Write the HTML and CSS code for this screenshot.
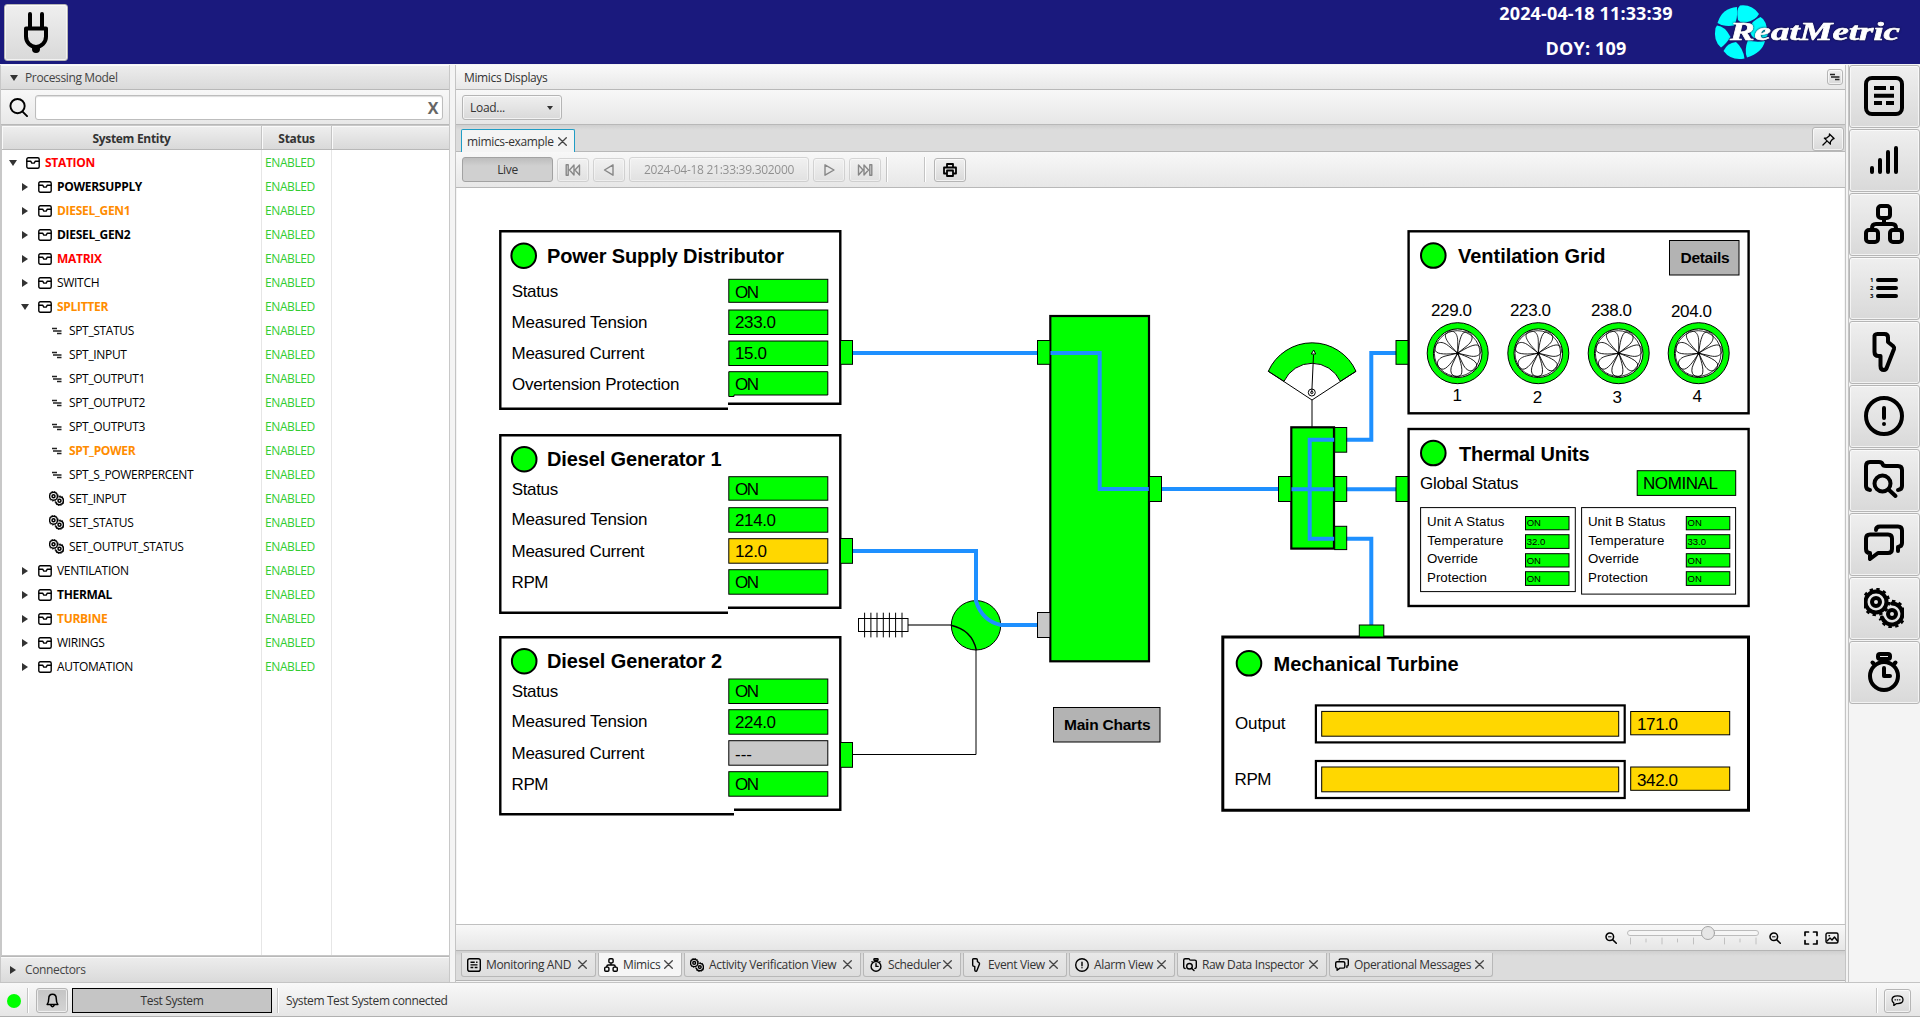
FILE: index.html
```html
<!DOCTYPE html>
<html lang="en">
<head>
<meta charset="utf-8">
<title>ReatMetric</title>
<link rel="stylesheet" href="styles.css">
</head>
<body>
<svg class="defs" aria-hidden="true">
  <defs>
    <symbol id="i-list" viewBox="0 0 40 40"><rect x="2" y="2" width="36" height="36" rx="6"/><path stroke-linecap="butt" d="M10 12h12M26 12h4M10 19.700h20M10 27h8M22 27h8"/></symbol>
    <symbol id="i-signal" viewBox="0 0 40 40"><path d="M8 28v4M16 20v12M24 12v20M32 8v24"/></symbol>
    <symbol id="i-tree" viewBox="0 0 40 40"><rect x="14" y="2" width="12" height="12" rx="3"/><rect x="2" y="26" width="12" height="12" rx="3"/><rect x="26" y="26" width="12" height="12" rx="3"/><path d="M20 15v5M8 25v-1q0-4 4-4h16q4 0 4 4v1"/></symbol>
    <symbol id="i-numbers" viewBox="0 0 40 40"><path d="M14 12h18M14 20h18M14 28h18"/><text class="tiny" x="6" y="14">1</text><text class="tiny" x="6" y="22">2</text><text class="tiny" x="6" y="30">3</text></symbol>
    <symbol id="i-event" viewBox="0 0 40 40"><path d="M13.500 2h7q3.500 0 3.500 3.500V10l5 4q1.500 1.500 1 3l-7 18q-1 3-3 3-3.500 0-3.500-4V24h-2q-4 0-4-4V5.500Q10 2 13.500 2z"/></symbol>
    <symbol id="i-alarm" viewBox="0 0 40 40"><circle cx="20" cy="20" r="18"/><path d="M20 12v10M20 28v.01"/></symbol>
    <symbol id="i-folder" viewBox="0 0 40 40"><path d="M6 30q-4-.5-4-4V6q0-4 4-4h9q3 0 3.500 2T22 6h12q4 0 4 4v16q0 3.500-4 4"/><circle cx="18.500" cy="23.500" r="8"/><path d="M24.500 29.500L31.500 36"/></symbol>
    <symbol id="i-chat" viewBox="0 0 40 40"><path d="M6 10.500h18q4 0 4 4V25q0 4-4 4H14l-8 6v-6q-4 0-4-4V14.500q0-4 4-4z"/><path d="M12 6q0-3.500 4-3.500h18q4 0 4 4V19q0 3.500-4 4v4"/></symbol>
    <symbol id="i-gears" viewBox="0 0 40 40" overflow="visible"><circle cx="12" cy="14" r="10.500"/><circle class="teeth" cx="12" cy="14" r="13" stroke-dasharray="3.400 3.400"/><circle cx="12" cy="14" r="4"/><circle cx="28" cy="26" r="4"/><path d="M28 15.500a10.500 10.500 0 1 1-10 14"/><path class="teeth" d="M28 13a13 13 0 1 1-12.200 17.500" stroke-dasharray="3.400 3.400"/></symbol>
    <symbol id="i-watch" viewBox="0 0 40 40"><circle cx="20" cy="24" r="14"/><rect x="14" y="2" width="12" height="5" rx="2"/><path d="M8.500 10.500l1 1M31.500 10.500l-1 1M20 16v8h6"/></symbol>
    <symbol id="i-box" viewBox="0 0 14 12"><rect x=".8" y=".8" width="12.400" height="10.400" rx="1.500"/><path d="M1 4.200h3.700l1.100 1.900h2.400l1.100-1.900H13"/></symbol>
    <symbol id="i-param" viewBox="0 0 10 8"><path d="M0 1.500h5M1 4h8.500M5 6.500h4.500"/></symbol>
    <symbol id="i-zoom" viewBox="0 0 12 12"><circle cx="4.800" cy="4.800" r="3.800"/><path d="M7.600 7.600L11.300 11.300"/><path class="bar-in" d="M3.500 4.800h2.600"/></symbol>
    <g id="petal"><path d="M0 0C-7-7-14-15-12-19C-9-24 0-24 0-12L0 0"/></g>
    <g id="fan">
      <circle class="ok thin" r="30.500"/>
      <circle class="white thin" r="24.300"/>
      <circle class="none hair" cx="-.5" cy=".3" r="22.800"/>
      <g class="none hair">
        <use href="#petal"/><use href="#petal" transform="rotate(51.400)"/><use href="#petal" transform="rotate(102.900)"/><use href="#petal" transform="rotate(154.300)"/><use href="#petal" transform="rotate(205.700)"/><use href="#petal" transform="rotate(257.100)"/><use href="#petal" transform="rotate(308.600)"/>
      </g>
      <circle r="1.500"/>
    </g>
  </defs>
</svg>

<header class="top">
  <button class="btn plug"><svg class="ic" viewBox="0 0 64 57"><path d="M26 10v14M38 10v14M22 24.500h20v8a10 10.500 0 0 1-20 0z"/><circle class="dot" cx="32" cy="45" r="4"/></svg></button>
  <div class="clock"><div class="t1">2024-04-18 11:33:39</div><div class="t2">DOY: 109</div></div>
  <svg class="logo" viewBox="0 0 210 64" width="210" height="64">
    <g fill="#0ff">
      <path d="M28 20Q26 9 30 5.500Q42 4 49 14Q46 20 36 22.500Q31 24 28 20Z"/>
      <path d="M50.500 17Q57 20 57.700 35Q56 39 44 38Q39 34 40 27Q42 21 50.500 17Z"/>
      <path d="M38 40Q46 43 55 41Q52 53 37 57.500Q34 50 38 40Z"/>
      <path d="M26 42Q33 48 34.500 58.500Q21 61 13.500 51Q17 43 26 42Z"/>
      <path d="M7 25.500Q15 26 20.500 37Q16 44 11 47.500Q3 41 5.500 28Z"/>
      <path d="M27 7Q28 19 24 25.500Q14 27 7.500 23Q12 8 27 7Z"/>
    </g>
    <text class="brand" x="20" y="40" textLength="170" lengthAdjust="spacingAndGlyphs">ReatMetric</text>
  </svg>
</header>

<main class="work">
  <section class="left">
    <div class="pane-title"><i class="tri down"></i>Processing Model</div>
    <div class="search"><svg class="lens" viewBox="0 0 20 20"><circle cx="9" cy="8.500" r="7.500"/><path d="M14 14l5 5"/></svg><div class="field"><b>X</b></div></div>
    <div class="tree">
      <div class="row head"><span>System Entity</span><span>Status</span><span></span></div>
      <div class="row l0"><span class="red"><i class="tri down"></i><svg class="bx"><use href="#i-box"/></svg>STATION</span><span>ENABLED</span><span></span></div>
      <div class="row l1"><span class="bold"><i class="tri"></i><svg class="bx"><use href="#i-box"/></svg>POWERSUPPLY</span><span>ENABLED</span><span></span></div>
      <div class="row l1"><span class="amber"><i class="tri"></i><svg class="bx"><use href="#i-box"/></svg>DIESEL_GEN1</span><span>ENABLED</span><span></span></div>
      <div class="row l1"><span class="bold"><i class="tri"></i><svg class="bx"><use href="#i-box"/></svg>DIESEL_GEN2</span><span>ENABLED</span><span></span></div>
      <div class="row l1"><span class="red"><i class="tri"></i><svg class="bx"><use href="#i-box"/></svg>MATRIX</span><span>ENABLED</span><span></span></div>
      <div class="row l1"><span><i class="tri"></i><svg class="bx"><use href="#i-box"/></svg>SWITCH</span><span>ENABLED</span><span></span></div>
      <div class="row l1"><span class="amber"><i class="tri down"></i><svg class="bx"><use href="#i-box"/></svg>SPLITTER</span><span>ENABLED</span><span></span></div>
      <div class="row l2"><span><svg class="pm"><use href="#i-param"/></svg>SPT_STATUS</span><span>ENABLED</span><span></span></div>
      <div class="row l2"><span><svg class="pm"><use href="#i-param"/></svg>SPT_INPUT</span><span>ENABLED</span><span></span></div>
      <div class="row l2"><span><svg class="pm"><use href="#i-param"/></svg>SPT_OUTPUT1</span><span>ENABLED</span><span></span></div>
      <div class="row l2"><span><svg class="pm"><use href="#i-param"/></svg>SPT_OUTPUT2</span><span>ENABLED</span><span></span></div>
      <div class="row l2"><span><svg class="pm"><use href="#i-param"/></svg>SPT_OUTPUT3</span><span>ENABLED</span><span></span></div>
      <div class="row l2"><span class="amber"><svg class="pm"><use href="#i-param"/></svg>SPT_POWER</span><span>ENABLED</span><span></span></div>
      <div class="row l2"><span><svg class="pm"><use href="#i-param"/></svg>SPT_S_POWERPERCENT</span><span>ENABLED</span><span></span></div>
      <div class="row l2"><span><svg class="ic gr"><use href="#i-gears"/></svg>SET_INPUT</span><span>ENABLED</span><span></span></div>
      <div class="row l2"><span><svg class="ic gr"><use href="#i-gears"/></svg>SET_STATUS</span><span>ENABLED</span><span></span></div>
      <div class="row l2"><span><svg class="ic gr"><use href="#i-gears"/></svg>SET_OUTPUT_STATUS</span><span>ENABLED</span><span></span></div>
      <div class="row l1"><span><i class="tri"></i><svg class="bx"><use href="#i-box"/></svg>VENTILATION</span><span>ENABLED</span><span></span></div>
      <div class="row l1"><span class="bold"><i class="tri"></i><svg class="bx"><use href="#i-box"/></svg>THERMAL</span><span>ENABLED</span><span></span></div>
      <div class="row l1"><span class="amber"><i class="tri"></i><svg class="bx"><use href="#i-box"/></svg>TURBINE</span><span>ENABLED</span><span></span></div>
      <div class="row l1"><span><i class="tri"></i><svg class="bx"><use href="#i-box"/></svg>WIRINGS</span><span>ENABLED</span><span></span></div>
      <div class="row l1"><span><i class="tri"></i><svg class="bx"><use href="#i-box"/></svg>AUTOMATION</span><span>ENABLED</span><span></span></div>
      <div class="row fill"><span></span><span></span><span></span></div>
    </div>
    <div class="pane-title bottom"><i class="tri"></i>Connectors</div>
  </section>

  <section class="center">
    <div class="view-title"><span>Mimics Displays</span><button class="btn mini"><svg class="pm"><use href="#i-param"/></svg></button></div>
    <div class="bar load"><button class="btn combo">Load...<i class="tri down"></i></button></div>
    <div class="tabs"><div class="tab active">mimics-example<svg class="x" viewBox="0 0 9 9"><path d="M.7.7l7.600 7.600M8.300.7L.7 8.300"/></svg></div><button class="btn pin"><svg viewBox="0 0 14 14"><path d="M8 1l5 5-1.500.500-2.500 3v2.500L2.500 5.500H5l3-2.500zM5.500 8.500L1 13"/></svg></button></div>
    <div class="bar player">
      <button class="btn live">Live</button>
      <button class="btn nav off"><svg viewBox="0 0 16 12"><path d="M1.200 .8h2v10.400h-2zM9 1v10L4.500 6zM14.500 1v10L10 6z"/></svg></button>
      <button class="btn nav off"><svg viewBox="0 0 16 12"><path d="M12 .8v10.400L3.500 6z"/></svg></button>
      <button class="btn time off">2024-04-18 21:33:39.302000</button>
      <button class="btn nav off"><svg viewBox="0 0 16 12"><path d="M4 .8v10.400L13 6z"/></svg></button>
      <button class="btn nav off"><svg viewBox="0 0 16 12"><path d="M1.500 1v10L6 6zM7 1v10l4.500-5zM12.800 .8h2v10.400h-2z"/></svg></button>
      <i class="sep"></i><i class="sep wide"></i>
      <button class="btn nav print"><svg viewBox="0 0 14 14"><path d="M4 3.500v-2.500h6v2.500M3.500 10.500H1v-6h12v6h-2.500M4 7.500h6v5.500H4z"/></svg></button>
    </div>

    <svg class="mimic" viewBox="457 188 1387 736">
      <g class="panel">
        <path d="M728 408.700H500.300V231.300H840.300V403.700H728"/>
        <path d="M728 612.700H500.300V435.300H840.300V607.700H728"/>
        <path d="M734 814.300H500.300V637.300H840.300V809.700H734"/>
        <rect x="1408.600" y="231.300" width="340" height="182"/>
        <rect x="1408.600" y="429" width="340" height="177"/>
        <path class="heavy" d="M1222.800 637H1748.500V810.300H1222.800z"/>
      </g>
      <g class="ok lamp">
        <circle cx="523.700" cy="255.700" r="12.300"/><circle cx="524.200" cy="459.200" r="12.300"/><circle cx="524.200" cy="661.200" r="12.300"/>
        <circle cx="1433.300" cy="255.500" r="12.300"/><circle cx="1433.300" cy="453" r="12.300"/><circle cx="1249" cy="663.300" r="12.300"/>
      </g>
      <g class="h">
        <text x="547" y="263" textLength="237">Power Supply Distributor</text>
        <text x="547" y="466" textLength="174.500">Diesel Generator 1</text>
        <text x="547" y="667.700" textLength="175">Diesel Generator 2</text>
        <text x="1458" y="262.700" textLength="147.500">Ventilation Grid</text>
        <text x="1459" y="460.500" textLength="130.500">Thermal Units</text>
        <text x="1273.500" y="670.700" textLength="185">Mechanical Turbine</text>
      </g>
      <g class="lbl">
        <text x="511.700" y="297.300" textLength="46.500">Status</text><text x="511.500" y="328" textLength="136">Measured Tension</text><text x="511.500" y="359" textLength="133">Measured Current</text><text x="512" y="390" textLength="167.500">Overtension Protection</text>
        <text x="511.700" y="495" textLength="46.500">Status</text><text x="511.500" y="525.300" textLength="136">Measured Tension</text><text x="511.500" y="557" textLength="133">Measured Current</text><text x="511.500" y="588" textLength="37">RPM</text>
        <text x="511.700" y="697.300" textLength="46.500">Status</text><text x="511.500" y="727" textLength="136">Measured Tension</text><text x="511.500" y="759.300" textLength="133">Measured Current</text><text x="511.500" y="790" textLength="37">RPM</text>
        <text x="1420" y="489" textLength="98.500">Global Status</text>
        <text x="1235" y="729" textLength="50.500">Output</text><text x="1234.500" y="785" textLength="37">RPM</text>
      </g>
      <g class="ok thin">
        <rect x="728.800" y="279.300" width="99" height="23"/><rect x="728.800" y="310" width="99" height="24.500"/><rect x="728.800" y="341" width="99" height="24.500"/><path d="M728.800 371.700H827.800V395H734V396.500H728.800z"/>
        <rect x="728.800" y="476.700" width="99" height="23.500"/><rect x="728.800" y="507.700" width="99" height="24.500"/><rect class="warn" x="728.800" y="538.700" width="99" height="24.500"/><rect x="728.800" y="569.700" width="99" height="24.500"/>
        <rect x="728.800" y="679" width="99" height="24.500"/><rect x="728.800" y="709.700" width="99" height="24.500"/><rect class="unk" x="728.800" y="740.700" width="99" height="24.500"/><rect x="728.800" y="771.700" width="99" height="24.500"/>
        <rect x="1637.200" y="470.700" width="98.500" height="24.700"/>
        <rect class="warn" x="1630.700" y="711.500" width="99" height="23.300"/><rect class="warn" x="1630.700" y="767" width="99" height="23.300"/>
      </g>
      <g class="lbl">
        <text x="735" y="298" textLength="24">ON</text><text x="735" y="328" textLength="41">233.0</text><text x="735" y="359" textLength="32">15.0</text><text x="735" y="390" textLength="24">ON</text>
        <text x="735" y="495" textLength="24">ON</text><text x="735" y="526" textLength="41">214.0</text><text x="735" y="557" textLength="32">12.0</text><text x="735" y="588" textLength="24">ON</text>
        <text x="735" y="697" textLength="24">ON</text><text x="735" y="728" textLength="41">224.0</text><text x="735" y="760" textLength="17">---</text><text x="735" y="790" textLength="24">ON</text>
        <text x="1643" y="489" textLength="75">NOMINAL</text>
        <text x="1637" y="730" textLength="41">171.0</text><text x="1637" y="786" textLength="41">342.0</text>
        <text x="1431" y="316.300" textLength="41">229.0</text><text x="1510" y="316.300" textLength="41">223.0</text><text x="1591" y="316.300" textLength="41">238.0</text><text x="1671" y="317" textLength="41">204.0</text>
        <text x="1452.500" y="401">1</text><text x="1532.700" y="402.500">2</text><text x="1612.500" y="402.500">3</text><text x="1692.500" y="402">4</text>
      </g>

      <g class="thin btnbox"><rect x="1669.500" y="240.500" width="69.500" height="34.500"/><rect x="1053.500" y="707.500" width="106.500" height="34.500"/></g>
      <g class="bt"><text x="1680.500" y="263" textLength="49">Details</text><text x="1064" y="730" textLength="86.500">Main Charts</text></g>

      <use href="#fan" x="1457.700" y="353.200"/><use href="#fan" x="1538.300" y="353.200"/><use href="#fan" x="1618.700" y="353.200"/><use href="#fan" x="1698.700" y="353.200"/>

      <g class="thin sub"><rect x="1420.600" y="507.600" width="154.700" height="84"/><rect x="1581.600" y="507.600" width="154" height="86.500"/></g>
      <g class="s">
        <text x="1427" y="526.300" textLength="77.500">Unit A Status</text><text x="1427.300" y="545.300" textLength="76">Temperature</text><text x="1427" y="563.300" textLength="51">Override</text><text x="1427" y="582.300" textLength="60">Protection</text>
        <text x="1588" y="526.300" textLength="77.500">Unit B Status</text><text x="1588.300" y="545.300" textLength="76">Temperature</text><text x="1588" y="563.300" textLength="51">Override</text><text x="1588" y="582.300" textLength="60">Protection</text>
      </g>
      <g class="ok thin">
        <rect x="1525.500" y="516.500" width="43.500" height="13.300"/><rect x="1525.500" y="534.700" width="43.500" height="13.700"/><rect x="1525.500" y="553.700" width="43.500" height="13.300"/><rect x="1525.500" y="571.700" width="43.500" height="13.700"/>
        <rect x="1686.300" y="516.500" width="43.500" height="13.300"/><rect x="1686.300" y="534.700" width="43.500" height="13.700"/><rect x="1686.300" y="553.700" width="43.500" height="13.300"/><rect x="1686.300" y="571.700" width="43.500" height="13.700"/>
      </g>
      <g class="xs">
        <text x="1526.700" y="526">ON</text><text x="1526.700" y="545">32.0</text><text x="1526.700" y="563.500">ON</text><text x="1526.700" y="582">ON</text>
        <text x="1687.500" y="526">ON</text><text x="1687.500" y="545">33.0</text><text x="1687.500" y="563.500">ON</text><text x="1687.500" y="582">ON</text>
      </g>

      <g class="panel gaugebar"><rect x="1315.900" y="705.400" width="308.800" height="37"/><rect x="1315.900" y="761" width="308.800" height="37"/></g>
      <g class="warn thin"><rect x="1321.700" y="711.400" width="297" height="24.800"/><rect x="1321.700" y="767" width="297" height="24.800"/></g>

      <rect class="ok mid" x="1050.300" y="316" width="98.700" height="345.300"/>
      <rect class="ok mid" x="1291.300" y="427.300" width="42.700" height="121.300"/>
      <path class="none coil" d="M908 625H951"/>
      <path class="none thin" d="M852 754.500H976V650"/>
      <circle class="ok thin" cx="976" cy="625.300" r="24.700"/>
      <path class="none dark" d="M951 625.300Q972 630 976.300 650"/>
      <g class="wire">
        <path d="M852 353H1037M1050 353H1099.700V489H1149M1161 489H1279"/>
        <path d="M852 551H976V601Q982 621 1001 625H1038"/>
        <path d="M1335 439.700H1309.700V538.700H1335M1291 489.200H1335"/>
        <path d="M1346 439.700H1371.300V353H1396M1346 489.200H1396M1346 538.700H1371.300V625"/>
      </g>
      <g class="ok thin">
        <rect x="840.500" y="340.500" width="12" height="23.800"/><rect x="840.500" y="538.500" width="12" height="24.800"/><rect x="840.500" y="742.500" width="12" height="24.800"/>
        <rect x="1037.500" y="340.500" width="12.500" height="23.800"/><rect class="unk" x="1037.500" y="612.500" width="12.500" height="25"/>
        <rect x="1149.300" y="476.500" width="12.200" height="25"/><rect x="1278.500" y="476.500" width="12.500" height="25"/>
        <rect x="1334.700" y="427.500" width="12" height="24.700"/><rect x="1334.700" y="476.500" width="12" height="25"/><rect x="1334.700" y="526.300" width="12" height="23.300"/>
        <rect x="1396" y="340.500" width="12" height="23.800"/><rect x="1396" y="476.500" width="12" height="25"/><rect x="1359.300" y="625" width="24.500" height="12"/>
      </g>
      <g class="none thin"><rect x="858.500" y="618.500" width="49.500" height="13"/><path d="M864.600 612.700v24.700M870.900 612.700v24.700M877 612.700v24.700M883.300 612.700v24.700M889.400 612.700v24.700M895.600 612.700v24.700M902 612.700v24.700"/></g>
      <g class="thin">
        <path class="okf" d="M1268.300 371.300A48 48 0 0 1 1356 371.300L1340.300 381.300A31 31 0 0 0 1284 381.300z"/>
        <path class="none" d="M1268.300 371.300L1312 400L1356 371.300"/>
        <path d="M1312 400V427M1311.800 392.500L1313.500 355"/>
        <circle class="none" cx="1311.800" cy="392.500" r="3.500"/><circle cx="1311.800" cy="392.500" r="1.200"/>
        <path class="white" d="M1311.300 354L1313.700 350L1315.700 354z"/>
      </g>
    </svg>

    <div class="zoombar">
      <svg class="zi"><use href="#i-zoom"/></svg>
      <svg class="slider" viewBox="0 0 132 22" width="132" height="22"><rect x=".5" y="5.500" width="131" height="5" rx="2.500" fill="#f6f6f6" stroke="#bcbcbc"/><path class="ticks" d="M3.500 13v6M19 14v3M35 13v6M50.500 14v3M66.500 13v6M97.500 13v6M113 14v3M129 13v6"/><circle cx="81" cy="8" r="6.500" fill="#e6e6e6" stroke="#a4a4a4"/></svg>
      <svg class="zi"><use href="#i-zoom"/></svg>
      <svg class="ex" viewBox="0 0 14 14"><path d="M1 4.500V1h3.500M9.500 1H13v3.500M13 9.500V13H9.500M4.500 13H1V9.500"/></svg>
      <svg class="pic" viewBox="0 0 14 12"><rect x="1" y="1" width="12" height="10" rx="1.500"/><path d="M2 9l3-3 2 2 2.500-3L12.500 9M4 3.800h.5"/></svg>
    </div>
    <div class="views">
      <div class="vt v1"><svg class="ic"><use href="#i-list"/></svg><span>Monitoring AND</span><svg class="x" viewBox="0 0 9 9"><path d="M.7.7l7.600 7.600M8.300.7L.7 8.300"/></svg></div>
      <div class="vt v2 on"><svg class="ic"><use href="#i-tree"/></svg><span>Mimics</span><svg class="x" viewBox="0 0 9 9"><path d="M.7.7l7.600 7.600M8.300.7L.7 8.300"/></svg></div>
      <div class="vt v3"><svg class="ic"><use href="#i-gears"/></svg><span>Activity Verification View</span><svg class="x" viewBox="0 0 9 9"><path d="M.7.7l7.600 7.600M8.300.7L.7 8.300"/></svg></div>
      <div class="vt v4"><svg class="ic"><use href="#i-watch"/></svg><span>Scheduler</span><svg class="x" viewBox="0 0 9 9"><path d="M.7.7l7.600 7.600M8.300.7L.7 8.300"/></svg></div>
      <div class="vt v5"><svg class="ic"><use href="#i-event"/></svg><span>Event View</span><svg class="x" viewBox="0 0 9 9"><path d="M.7.7l7.600 7.600M8.300.7L.7 8.300"/></svg></div>
      <div class="vt v6"><svg class="ic"><use href="#i-alarm"/></svg><span>Alarm View</span><svg class="x" viewBox="0 0 9 9"><path d="M.7.7l7.600 7.600M8.300.7L.7 8.300"/></svg></div>
      <div class="vt v7"><svg class="ic"><use href="#i-folder"/></svg><span>Raw Data Inspector</span><svg class="x" viewBox="0 0 9 9"><path d="M.7.7l7.600 7.600M8.300.7L.7 8.300"/></svg></div>
      <div class="vt v8"><svg class="ic"><use href="#i-chat"/></svg><span>Operational Messages</span><svg class="x" viewBox="0 0 9 9"><path d="M.7.7l7.600 7.600M8.300.7L.7 8.300"/></svg></div>
    </div>
  </section>

  <nav class="side">
    <button class="btn"><svg class="ic"><use href="#i-list"/></svg></button>
    <button class="btn"><svg class="ic"><use href="#i-signal"/></svg></button>
    <button class="btn"><svg class="ic"><use href="#i-tree"/></svg></button>
    <button class="btn"><svg class="ic"><use href="#i-numbers"/></svg></button>
    <button class="btn"><svg class="ic"><use href="#i-event"/></svg></button>
    <button class="btn"><svg class="ic"><use href="#i-alarm"/></svg></button>
    <button class="btn"><svg class="ic"><use href="#i-folder"/></svg></button>
    <button class="btn"><svg class="ic"><use href="#i-chat"/></svg></button>
    <button class="btn"><svg class="ic"><use href="#i-gears"/></svg></button>
    <button class="btn"><svg class="ic"><use href="#i-watch"/></svg></button>
  </nav>
</main>

<footer class="status">
  <i class="led"></i><i class="sep"></i>
  <button class="btn bell"><svg viewBox="0 0 12 14"><path d="M6 1.200q3.500 0 3.500 4Q9.500 9 11 10.700H1Q2.500 9 2.500 5.200q0-4 3.500-4zM4.500 11.500q1.500 2.500 3 0"/></svg></button>
  <div class="system">Test System</div><i class="sep"></i>
  <span class="msg">System Test System connected</span>
  <i class="sep end"></i>
  <button class="btn talk"><svg viewBox="0 0 14 12"><path d="M7 1q6 0 6 4.200T7 9.300H6L3 11.500V8.600Q1 7.500 1 5.200 1 1 7 1z"/><path d="M4.300 5.200h.4M6.800 5.200h.4M9.300 5.200h.4"/></svg></button>
</footer>
</body>
</html>
```
FILE: styles.css
```css
* { box-sizing: border-box; }
html, body { height: 100%; }
body {
  margin: 0;
  display: flex;
  flex-direction: column;
  width: 1920px;
  height: 1017px;
  overflow: hidden;
  background: #f4f4f4;
  color: #333;
  font: 12px/16px "Open Sans", "Noto Sans", sans-serif;
  letter-spacing: -0.36px;
}
.defs { position: absolute; width: 0; height: 0; }
button { font: inherit; color: inherit; letter-spacing: inherit; padding: 0; margin: 0; }
.btn {
  display: flex;
  align-items: center;
  justify-content: center;
  border: 1px solid #b5b5b5;
  border-radius: 3px;
  background: linear-gradient(#efefef, #d9d9d9);
  box-shadow: inset 0 0 0 1px rgba(255, 255, 255, 0.65);
}
svg { fill: none; stroke: #000; flex: none; stroke-linecap: round; stroke-linejoin: round; }
svg text { stroke: none; fill: #000; letter-spacing: 0; }
.ic { stroke-width: 4; width: 40px; height: 40px; }
.ic .teeth, .teeth { stroke-width: 2.4; stroke-linecap: butt; }
.bar-in { stroke-width: 1; }
.tiny { font: bold 6px "Open Sans", sans-serif; }
.dot { fill: #000; stroke: none; }
.tri { width: 0; height: 0; border-left: 6px solid #333; border-top: 4px solid transparent; border-bottom: 4px solid transparent; flex: none; }
.tri.down { border-left: 4px solid transparent; border-right: 4px solid transparent; border-top: 6px solid #333; border-bottom: 0; }

.top { height: 64px; flex: none; background: #1a197d; display: flex; align-items: flex-start; }
.plug { width: 64px; height: 57px; margin: 4px 0 0 4px; }
.plug .ic { width: 64px; height: 57px; }
.clock { margin-left: auto; width: 260px; text-align: center; color: #fff; font: bold 18px/24px "Open Sans", sans-serif; letter-spacing: 0.15px; }
.t1 { margin-top: 1px; }
.t2 { margin-top: 11px; }
.logo { margin-left: -6px; stroke: none; }
.logo .brand { font: italic bold 25px "Liberation Serif", serif; fill: #fff; stroke: #fff; stroke-width: 0.6px; filter: drop-shadow(0 0 1px #0a0a30); }

.work { flex: none; height: 918px; display: flex; padding-top: 1px; }

.left { width: 450px; flex: none; display: flex; flex-direction: column; border: solid #c8c8c8; border-width: 0 1px; }
.pane-title { height: 25px; flex: none; display: flex; align-items: center; padding: 2px 0 0 9px; gap: 7px; color: #444; background: linear-gradient(#ededed, #dadada); border-bottom: 1px solid #b8b8b8; box-shadow: inset 0 1px #fafafa; }
.pane-title.bottom { border-top: 1px solid #b8b8b8; border-bottom: 0; gap: 9px; height: 26px; padding-top: 0; }
.search { height: 35px; flex: none; display: flex; align-items: center; gap: 7px; padding: 1px 6px 0 8px; background: linear-gradient(#f8f8f8, #e8e8e8); border-bottom: 1px solid #b8b8b8; }
.lens { width: 19px; height: 19px; stroke-width: 2; }
.field { flex: 1; height: 25px; background: #fff; border: 1px solid #bdbdbd; border-radius: 3px; display: flex; align-items: center; justify-content: flex-end; padding-right: 4px; font-size: 16px; color: #666; box-shadow: inset 0 1px 1px #ddd; }
.tree { flex: 1; min-height: 0; display: flex; flex-direction: column; background: #fff; border: 1px solid #c8c8c8; border-width: 1px 0 1px 1px; color: #000; }
.row { display: grid; grid-template-columns: 260px 70px 1fr; height: 24px; flex: none; }
.row > span { display: flex; align-items: center; border-right: 1px solid #e6e6e6; white-space: pre; padding-top: 1px; letter-spacing: -0.3px; }
.row > span:last-child { border-right: 0; }
.row > span:nth-child(2) { color: #32cd32; padding-left: 3px; letter-spacing: -0.4px; }
.row.head { background: linear-gradient(#efefef, #d9d9d9); border-bottom: 1px solid #b8b8b8; font-weight: bold; color: #333; }
.row.head > span, .row.head > span:nth-child(2) { justify-content: center; border-color: #c4c4c4; color: #333; padding: 2px 0 0; letter-spacing: -0.3px; box-shadow: inset 1px 1px #fafafa; }
.row.fill { flex: 1; }
.l0 > span:first-child { padding-left: 7px; }
.l1 > span:first-child { padding-left: 20px; }
.l2 > span:first-child { padding-left: 47px; letter-spacing: -0.34px; }
.row .tri { margin-right: 10px; }
.row .tri.down { margin: 0 9px 0 0; }
.l1 .tri.down { margin: 0 9px 0 -1px; }
.bx { width: 14px; height: 12px; stroke-width: 1.4; margin-right: 5px; }
.pm { width: 10px; height: 8px; stroke-width: 1.3; stroke-linecap: butt; stroke: #222; }
.row .pm { margin: 0 7px 0 3px; }
.gr { width: 15px; height: 15px; margin-right: 5px; }
.row .bold { font-weight: bold; }
.row .red { font-weight: bold; color: #f00; }
.row .amber { font-weight: bold; color: #ff8c00; }

.center { width: 1391px; flex: none; margin-left: 5px; display: flex; flex-direction: column; border: solid #c4c4c4; border-width: 0 1px; }
.view-title { height: 25px; flex: none; display: flex; align-items: center; justify-content: space-between; padding: 0 2px 0 8px; background: linear-gradient(#fafafa, #e8e8e8); border-bottom: 1px solid #b8b8b8; }
.view-title span { padding-top: 2px; }
.mini { width: 16px; height: 16px; }
.bar { flex: none; display: flex; align-items: center; background: linear-gradient(#f8f8f8, #e7e7e7); border-bottom: 1px solid #b8b8b8; padding-left: 6px; }
.load { height: 35px; padding-top: 1px; }
.combo { width: 100px; height: 25px; justify-content: space-between; padding: 0 8px 0 7px; letter-spacing: -0.3px; }
.combo .tri.down { border-top-width: 4px; border-left-width: 3.5px; border-right-width: 3.5px; }
.tabs { height: 27px; flex: none; display: flex; justify-content: space-between; align-items: flex-start; background: linear-gradient(#cfcfcf, #dcdcdc 5px); border-bottom: 1px solid #b8b8b8; padding: 2px 1px 0 5px; }
.tab { width: 114px; height: 25px; margin-top: 2px; display: flex; align-items: center; justify-content: space-between; padding: 0 7px 1px 5px; background: #f4f4f4; border: 1.5px solid #1f9dc5; border-bottom: 0; border-radius: 2px 2px 0 0; letter-spacing: -0.35px; }
.x { width: 9px; height: 9px; stroke: #444; stroke-width: 1.3; }
.pin { width: 32px; height: 24px; }
.pin svg { width: 13px; height: 13px; stroke-width: 1.4; }
.print svg { width: 14px; height: 14px; stroke-width: 1.8; }
.player { height: 36px; gap: 4px; }
.live { width: 91px; height: 25px; background: linear-gradient(#bdbdbd, #d0d0d0 8px); border-color: #a2a2a2; box-shadow: none; }
.nav { width: 32px; height: 24px; }
.nav.off svg { width: 16px; height: 12px; stroke-width: 1.4; stroke: #222; }
.time { width: 180px; height: 25px; letter-spacing: -0.28px; }
.off { opacity: 0.5; }
.sep { width: 2px; height: 25px; border-left: 1px solid #c4c4c4; background: #fff; flex: none; }
.player .sep { margin-left: 1px; }
.player .sep.wide { margin: 0 4px 0 32px; }
.mimic { height: 736px; flex: none; margin: 0 1px; background: #fff; border: 0; font-family: "Liberation Sans", Arial, sans-serif; }
.zoombar { height: 26px; flex: none; display: flex; align-items: center; justify-content: flex-end; padding-right: 6px; background: linear-gradient(#f8f8f8, #e6e6e6); border-top: 1px solid #c0c0c0; }
.zi { width: 12px; height: 12px; stroke-width: 1.5; }
.slider { margin: 0 10px 4px 10px; stroke: none; }
.ticks { stroke: #c0c0c0; stroke-width: 1; }
.ex { width: 14px; height: 14px; stroke-width: 1.7; margin: 0 7px 0 23px; }
.pic { width: 14px; height: 12px; stroke-width: 1.4; }
.views { height: 31px; flex: none; display: flex; align-items: flex-start; gap: 2px; padding: 2px 0 0 5px; background: linear-gradient(#cfcfcf, #dcdcdc 5px); border-top: 1px solid #b4b4b4; border-bottom: 1px solid #b4b4b4; }
.vt { height: 24px; display: flex; align-items: center; padding: 0 8px 0 5px; background: linear-gradient(#e8e8e8, #dedede); border: 1px solid #b8b8b8; border-top: 0; border-radius: 0 0 3px 3px; white-space: nowrap; }
.vt.on { background: #f6f6f6; }
.vt .ic { width: 14px; height: 14px; }
.vt span { margin-left: 5px; flex: 1; }
.v1 { width: 135px; } .v2 { width: 84px; } .v3 { width: 177px; } .v4 { width: 98px; }
.v5 { width: 104px; } .v6 { width: 106px; } .v7 { width: 150px; } .v8 { width: 164px; }
.v3 span { letter-spacing: -0.32px; }

.side { margin-left: 2px; width: 72px; flex: none; display: flex; flex-direction: column; gap: 1px; border-left: 1px solid #c4c4c4; }
.side .btn { height: 63px; padding: 0 1px 1px 0; }

.status { height: 35px; flex: none; display: flex; align-items: center; background: linear-gradient(#f8f8f8, #e6e6e6); border-bottom: 1px solid #b0b0b0; border-top: 1px solid #c4c4c4; padding: 2px 0 0 7px; }
.led { width: 14px; height: 14px; border-radius: 50%; background: #0f0; margin-right: 6px; }
.bell { width: 32px; height: 25px; margin: 0 4px 0 7px; background: linear-gradient(#c4c4c4, #d4d4d4); }
.bell svg { width: 13px; height: 15px; stroke-width: 1.4; }
.system { width: 200px; height: 25px; display: flex; align-items: center; justify-content: center; background: #c5c5c5; border: 1px solid #000; margin-right: 5px; }
.msg { margin-left: 7px; letter-spacing: -0.8px; letter-spacing: -0.8px; }
.status .msg { letter-spacing: -0.82px; letter-spacing: -0.38px; }
.sep.end { margin-left: auto; margin-right: 6px; }
.talk { width: 27px; height: 24px; margin-right: 9px; }
.talk svg { width: 13px; height: 11px; stroke-width: 1.4; }

/* mimic drawing */
.mimic * { stroke-linecap: butt; }
.mimic { stroke: none; stroke-linejoin: miter; }
.panel { fill: #fff; stroke: #000; stroke-width: 2.4; }
.panel .heavy { stroke-width: 3; }
.gaugebar { stroke-width: 2.2; }
.ok, .okf { fill: #0f0; }
.warn { fill: gold; }
.unk { fill: #c8c8c8; }
.white { fill: #fff; }
.none { fill: none; }
.thin { stroke: #000; stroke-width: 1; }
.hair { stroke: #000; stroke-width: 0.8; }
.dark { stroke: #000; stroke-width: 1.4; }
.mid { stroke: #000; stroke-width: 2.2; }
.coil { stroke: #444; stroke-width: 1.7; }
.lamp { stroke: #000; stroke-width: 2; }
.sub { fill: none; }
.btnbox { fill: #b3b3b3; }
.wire { fill: none; stroke: #1e90ff; stroke-width: 4; }
#fan > circle:last-child { fill: #000; stroke: none; }
.h { font-size: 20px; font-weight: bold; }
.lbl { font-size: 17px; }
.bt { font-size: 15.5px; font-weight: bold; }
.s { font-size: 13.3px; }
.xs { font-size: 9.5px; }
```
